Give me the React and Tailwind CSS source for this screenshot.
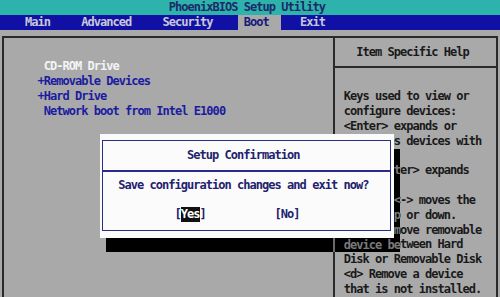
const helpLines = [
  "",
  "Keys used to view or",
  "configure devices:",
  "<Enter> expands or",
  "collapses devices with",
  "a + or -",
  "<Ctrl+Enter> expands",
  "all",
  "<+> and <-> moves the",
  "device up or down.",
  "<n> May move removable",
  "device between Hard",
  "Disk or Removable Disk",
  "<d> Remove a device",
  "that is not installed.",
];

// chars under the right edge of the dialog shadow (column 63, rows 10-15)
const shadowChars = ["", "t", "", "<", "p", "m"];

const Row = ({ className = "", children }) => (
  <div className={`h-[14.85px] leading-[14.85px] whitespace-pre ${className}`}>
    {children}
  </div>
);

export default function App() {
  return (
    <div className="relative w-[500px] h-[297px] overflow-hidden bg-[#a9a9a9] font-['DejaVu_Sans_Mono',monospace] text-[12px] font-bold tracking-[-0.97px]">
      {/* title bar */}
      <Row className="bg-[#2db3ab] text-[#1c2a6a] pl-[168.75px]">PhoenixBIOS Setup Utility</Row>

      {/* menu bar */}
      <Row className="flex bg-[#1010a4] text-[#c8c8d8] pl-[25px]">
        <span className="w-[56.25px]">Main</span>
        <span className="w-[81.25px]">Advanced</span>
        <span className="w-[75px]">Security</span>
        <span className="w-[43.75px] bg-[#a9a9a9] text-[#1a1a7a] pl-[6.25px]">Boot</span>
        <span className="ml-[18.75px]">Exit</span>
      </Row>

      {/* main box */}
      <div className="mt-[6.4px] ml-[2px] w-[496px] h-[300px] border-2 border-[#2a2a2a] flex">
        <div className="w-[331.4px] border-r-2 border-[#2a2a2a] pt-[6.45px] text-[#1c1ca0]">
          <Row />
          <Row className="pl-[39.75px] text-[#f4f4f4]">CD-ROM Drive</Row>
          <Row className="pl-[33.5px]">+Removable Devices</Row>
          <Row className="pl-[33.5px]">+Hard Drive</Row>
          <Row className="pl-[39.75px]">Network boot from Intel E1000</Row>
        </div>
        <div className="flex-1 pt-[6.45px] text-[#1a1a1a]">
          <Row className="pl-[20.85px]">Item Specific Help</Row>
          <div className="h-[14.85px] flex items-center">
            <div className="w-full h-[2px] bg-[#2a2a2a]" />
          </div>
          {helpLines.map((line, i) => (
            <Row key={i} className="pl-[8.35px]">
              {line}
            </Row>
          ))}
        </div>
      </div>

      {/* confirmation dialog */}
      <div className="absolute left-[100px] top-[133.65px] w-[293.75px] h-[103.95px] bg-[#fbfbfb] px-[2.35px] py-[6.7px]">
        <div className="h-full border-[1.5px] border-[#2b2b8c] pt-[6.65px] text-[#22226e]">
          <Row className="pl-[83.65px]">Setup Confirmation</Row>
          <div className="h-[14.85px] pt-[7.5px]">
            <div className="h-[1.5px] bg-[#2b2b8c]" />
          </div>
          <Row className="pl-[14.9px]">Save configuration changes and exit now?</Row>
          <Row />
          <Row className="flex pl-[71.15px]">
            <span>[</span>
            <span className="bg-[#111] text-white">Yes</span>
            <span>]</span>
            <span className="ml-[68.75px]">[No]</span>
          </Row>
        </div>
      </div>

      {/* dialog shadow */}
      <div className="absolute left-[393.75px] top-[148.5px] w-[6.25px] bg-black text-[#7a7a7a] overflow-hidden">
        {shadowChars.map((c, i) => (
          <Row key={i}>{c}</Row>
        ))}
      </div>
      <div className="absolute left-[106.25px] top-[237.6px] w-[293.75px] h-[14.85px] bg-black flex text-[#7a7a7a] leading-[14.85px]">
        <span className="w-[225px]" />
        <span className="w-[6.25px] flex justify-center">
          <span className="w-[2px] h-full bg-[#6a6a6a]" />
        </span>
        <span className="w-[6.25px]" />
        <span className="whitespace-pre">device be</span>
      </div>
    </div>
  );
}
